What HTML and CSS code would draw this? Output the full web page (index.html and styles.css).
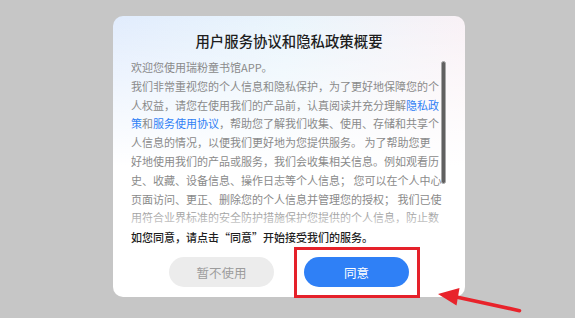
FILE: index.html
```html
<!DOCTYPE html>
<html lang="zh">
<head>
<meta charset="utf-8">
<link rel="stylesheet" href="styles.css">
</head>
<body>
<div class="dialog">
  <h1 class="title">用户服务协议和隐私政策概要</h1>
  <div class="content">
    <div class="text">
      <p class="line">欢迎您使用瑞粉童书馆APP。</p>
      <p class="para">我们非常重视您的个人信息和隐私保护，为了更好地保障您的个人权益，请您在使用我们的产品前，认真阅读并充分理解<span class="link">隐私政策</span>和<span class="link">服务使用协议</span>，帮助您了解我们收集、使用、存储和共享个人信息的情况，以便我们更好地为您提供服务。 为了帮助您更<br>好地使用我们的产品或服务，我们会收集相关信息。例如观看历史、收藏、设备信息、操作日志等个人信息； 您可以在个人中心页面访问、更正、删除您的个人信息并管理您的授权； 我们已使用符合业界标准的安全防护措施保护您提供的个人信息，防止数据遭到未经授权的访问、公开披露、使用、修改、损坏或丢失。</p>
    </div>
    <div class="fade"></div>
    <div class="scrollbar"></div>
  </div>
  <p class="notice">如您同意，请点击“同意”开始接受我们的服务。</p>
  <div class="actions">
    <button class="btn btn-decline">暂不使用</button>
    <button class="btn btn-agree">同意</button>
  </div>
</div>
<div class="highlight"></div>
<svg class="arrow" width="100" height="36" viewBox="0 0 100 36">
  <line x1="89.5" y1="28.7" x2="24" y2="14.5" stroke="#e8232b" stroke-width="3.6" stroke-linecap="round"/>
  <polygon points="8,12 29.5,6 26.5,23.5" fill="#e8232b"/>
</svg>
</body>
</html>
```
FILE: styles.css
```css
* { box-sizing: border-box; }
html, body { margin: 0; padding: 0; }
body {
  width: 575px;
  height: 318px;
  overflow: hidden;
  background: #c6c6c6;
  font-family: "Noto Sans CJK SC", "Noto Sans", sans-serif;
  position: relative;
}
.dialog {
  margin: 16px 0 0 113px;
  width: 352px;
  height: 281px;
  border-radius: 10px;
  background:
    linear-gradient(180deg, rgba(255,255,255,0) 0px, #ffffff 150px),
    linear-gradient(100deg, #e1ecfd 0%, #eaf5fc 45%, #fdf0f4 100%);
  padding: 15px 0 0 18px;
  display: block;
  overflow: hidden;
}
.title {
  margin: 0 18px 0 0;
  height: 20px;
  font-size: 14.4px;
  line-height: 20px;
  font-weight: 500;
  color: #1e1e1e;
  text-align: center;
}
.content {
  position: relative;
  margin-top: 7px;
  height: 169px;
  overflow: hidden;
}
.text {
  width: 312px;
  font-size: 11px;
  line-height: 18.8px;
  color: #8a8a8a;
}
.line, .para {
  margin: 0;
  font-size: 11px;
  line-height: 18.8px;
}
.fade {
  position: absolute;
  left: 0;
  width: 312px;
  bottom: 0;
  height: 20px;
  background: linear-gradient(180deg, rgba(255,255,255,0), rgba(255,255,255,0.65));
}
.link { color: #2f7ff5; }
.scrollbar {
  position: absolute;
  left: 310px;
  top: 3px;
  width: 5px;
  height: 123px;
  border-radius: 3px;
  background: #606060;
  border: 1px solid #a8a8a8;
}
.notice {
  margin: 1px 0 0 0;
  height: 19px;
  font-size: 11px;
  line-height: 19px;
  color: #1e1e1e;
  font-weight: 500;
}
.actions {
  margin-top: 10px;
  margin-right: 18px;
  display: flex;
  justify-content: center;
  gap: 30px;
}
.btn {
  width: 105px;
  height: 30px;
  border: none;
  border-radius: 15px;
  font-family: inherit;
  font-size: 12.5px;
  padding: 0;
}
.btn-decline { background: #ececec; color: #9c9c9c; }
.btn-agree { background: #2f80f6; color: #ffffff; }
.highlight {
  position: absolute;
  left: 294px;
  top: 247px;
  width: 126px;
  height: 51px;
  border: 3px solid #e5212a;
}
.arrow {
  position: absolute;
  left: 430px;
  top: 282px;
}
```
